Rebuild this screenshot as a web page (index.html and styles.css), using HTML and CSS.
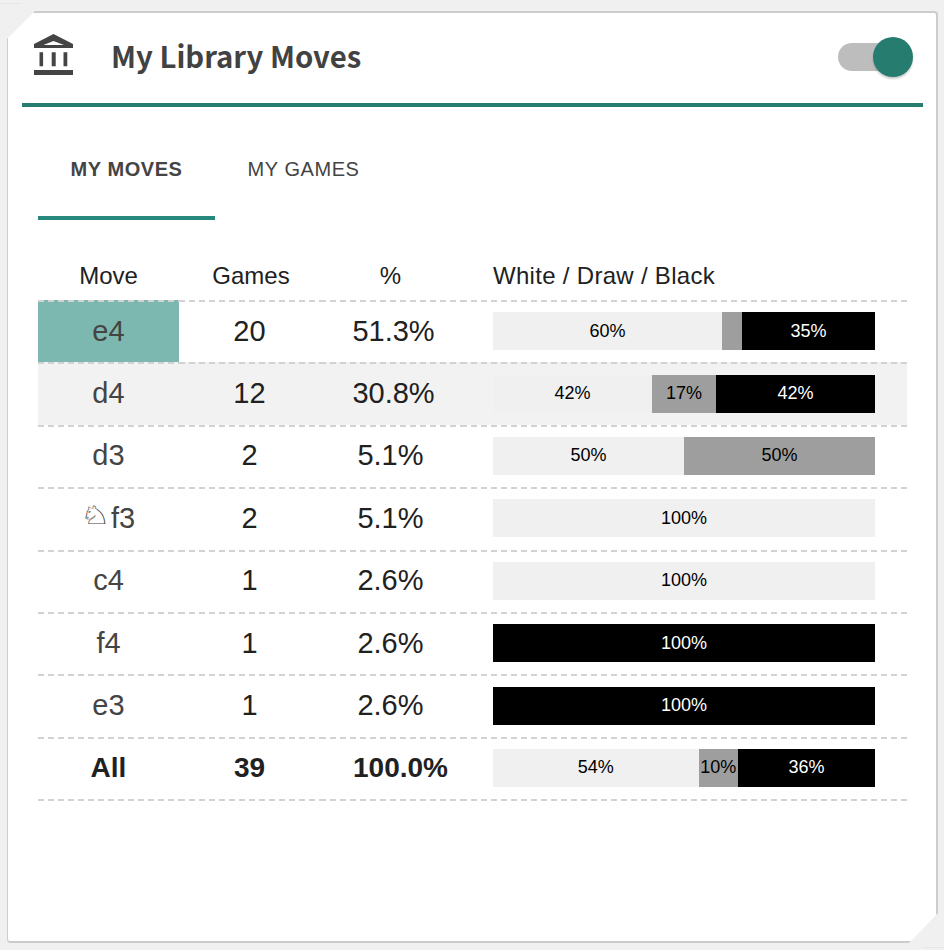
FILE: index.html
```html
<!DOCTYPE html>
<html lang="en">
<head>
<meta charset="utf-8">
<title>My Library Moves</title>
<link rel="stylesheet" href="styles.css">
</head>
<body>
<main class="card">
  <header class="head">
    <svg class="bank" viewBox="0 0 39 41" aria-hidden="true">
      <path fill="#444" fill-rule="evenodd" d="M19.5 0 39 10V14H0V10ZM19.5 7 9.5 11H30Z"/>
      <path fill="#444" d="M5.5 18.3h3.6v14H5.5zM17.7 18.3h4v14h-4zM29.5 18.3h3.8v14h-3.8zM0 36h39v5H0z"/>
    </svg>
    <h1 class="title">My Library Moves</h1>
    <div class="toggle"><span class="track"></span><span class="knob"></span></div>
  </header>
  <nav class="tabs">
    <a class="tab active">MY MOVES</a>
    <a class="tab">MY GAMES</a>
  </nav>
  <table class="moves">
    <thead>
      <tr><th>Move</th><th class="games">Games</th><th>%</th><th class="wdb">White / Draw / Black</th></tr>
    </thead>
    <tbody>
      <tr>
        <td class="mv sel">e4</td><td>20</td><td class="pct-wide">51.3%</td>
        <td class="barcell"><div class="bar"><span class="w" style="width:60%">60%</span><span class="d" style="width:5.2%"></span><span class="b" style="width:34.8%">35%</span></div></td>
      </tr>
      <tr class="alt">
        <td class="mv">d4</td><td>12</td><td class="pct-wide">30.8%</td>
        <td class="barcell"><div class="bar"><span class="w" style="width:41.67%">42%</span><span class="d" style="width:16.66%">17%</span><span class="b" style="width:41.67%">42%</span></div></td>
      </tr>
      <tr>
        <td class="mv">d3</td><td>2</td><td>5.1%</td>
        <td class="barcell"><div class="bar"><span class="w" style="width:50%">50%</span><span class="d" style="width:50%">50%</span></div></td>
      </tr>
      <tr>
        <td class="mv knight"><span class="piece">♘</span>f3</td><td>2</td><td>5.1%</td>
        <td class="barcell"><div class="bar"><span class="w" style="width:100%">100%</span></div></td>
      </tr>
      <tr>
        <td class="mv">c4</td><td>1</td><td>2.6%</td>
        <td class="barcell"><div class="bar"><span class="w" style="width:100%">100%</span></div></td>
      </tr>
      <tr>
        <td class="mv">f4</td><td>1</td><td>2.6%</td>
        <td class="barcell"><div class="bar"><span class="b" style="width:100%">100%</span></div></td>
      </tr>
      <tr>
        <td class="mv">e3</td><td>1</td><td>2.6%</td>
        <td class="barcell"><div class="bar"><span class="b" style="width:100%">100%</span></div></td>
      </tr>
      <tr class="total">
        <td>All</td><td>39</td><td class="pct-total">100.0%</td>
        <td class="barcell"><div class="bar"><span class="w" style="width:53.85%">54%</span><span class="d" style="width:10.26%">10%</span><span class="b" style="width:35.89%">36%</span></div></td>
      </tr>
    </tbody>
  </table>
</main>
</body>
</html>
```
FILE: styles.css
```css
* { box-sizing: border-box; }
html, body { margin: 0; height: 100%; }
body {
  position: relative;
  background: #f0f0f0;
  padding: 11px 6px 7px 7px;
  font-family: "Liberation Sans", Arial, sans-serif;
  overflow: hidden;
}
body::before, body::after {
  content: "";
  position: absolute;
  width: 22px;
  height: 1px;
  background: #e7e7e7;
}
body::before { left: 0; top: 3px; }
body::after { right: 0; bottom: 2px; }
.card {
  width: 931px;
  height: 932px;
  background: #fff;
  border: 2px solid #ccc;
  border-left-width: 1px;
  border-radius: 4px;
  padding: 0 13px 0 14px;
  clip-path: polygon(28px 0, 100% 0, 100% calc(100% - 30px), calc(100% - 29px) 100%, 0 100%, 0 28px);
}
.head {
  display: flex;
  align-items: center;
  height: 94px;
  border-bottom: 4px solid #267c6e;
  padding: 0 0 2px 12px;
  width: 901px;
}
.bank { width: 39px; height: 41px; flex: none; margin-top: -6px; }
.title {
  margin: 0 0 4px 38px;
  font: 700 29.3px "Noto Sans CJK SC", "Noto Sans", sans-serif;
  color: #424242;
  flex: 1;
}
.toggle { position: relative; width: 75px; height: 40px; flex: none; margin-right: 10px; }
.track {
  position: absolute;
  left: 0; top: 6px;
  width: 55px; height: 28px;
  border-radius: 14px;
  background: #bdbdbd;
}
.knob {
  position: absolute;
  right: 0; top: 0;
  width: 40px; height: 40px;
  border-radius: 50%;
  background: #267c6e;
  box-shadow: 0 2px 2px rgba(0,0,0,.2);
}
.tabs {
  display: flex;
  margin: 0 16px;
  height: 113px;
}
.tab {
  width: 177px;
  height: 113px;
  text-align: center;
  line-height: 124px;
  font-size: 20px;
  letter-spacing: .55px;
  color: #444;
}
.tab.active {
  font-weight: 700;
  border-bottom: 4px solid #26897b;
}
.moves {
  margin: 0 16px;
  width: 869px;
  border-collapse: separate;
  border-spacing: 0;
  table-layout: fixed;
  color: #212121;
}
.moves th {
  width: 141px;
  font-size: 24px;
  font-weight: 400;
  height: 80px;
  padding: 32px 0 0;
  text-align: center;
}
.moves th.games { padding-left: 3px; }
.moves th.wdb { width: 446px; text-align: left; padding-left: 32px; letter-spacing: .3px; }
.moves td {
  height: 62.4px;
  padding: 0;
  background-image: repeating-linear-gradient(90deg, #d2d2d2 0 6px, transparent 6px 10px);
  background-size: 100% 2px;
  background-position: 0 0;
  background-repeat: no-repeat;
  font-size: 29px;
  text-align: center;
}
.moves .total td {
  height: 64.4px;
  padding-bottom: 2px;
  background-image: repeating-linear-gradient(90deg, #d2d2d2 0 6px, transparent 6px 10px), repeating-linear-gradient(90deg, #d2d2d2 0 6px, transparent 6px 10px);
  background-size: 100% 2px, 100% 2px;
  background-position: 0 0, 0 100%;
  background-repeat: no-repeat;
  font-size: 28px;
  font-weight: 700;
}
.moves td.mv { color: #444; }
.moves td.sel { background-color: #7cb8b0; }
.moves .alt td { background-color: #f2f2f2; }
.moves td.pct-wide { padding-left: 6px; }
.moves .total td.pct-total { padding-left: 20px; }
.moves td.knight { padding-right: 2px; }
.piece {
  display: inline-block;
  margin: 0 2.6px;
  font-family: "DejaVu Sans", sans-serif;
  font-weight: 400;
  transform: translateY(-3px) scale(1.2, .88);
}
.moves td.barcell { padding-left: 32px; padding-right: 0; text-align: left; }
.moves .total td.barcell { font-size: 18px; }
.bar { display: flex; width: 382px; height: 38px; font-size: 18px; font-weight: 400; }
.bar span { display: flex; align-items: center; justify-content: center; }
.w { background: #f0f0f0; color: #000; }
.d { background: #9e9e9e; color: #000; }
.b { background: #000; color: #fff; }
```
